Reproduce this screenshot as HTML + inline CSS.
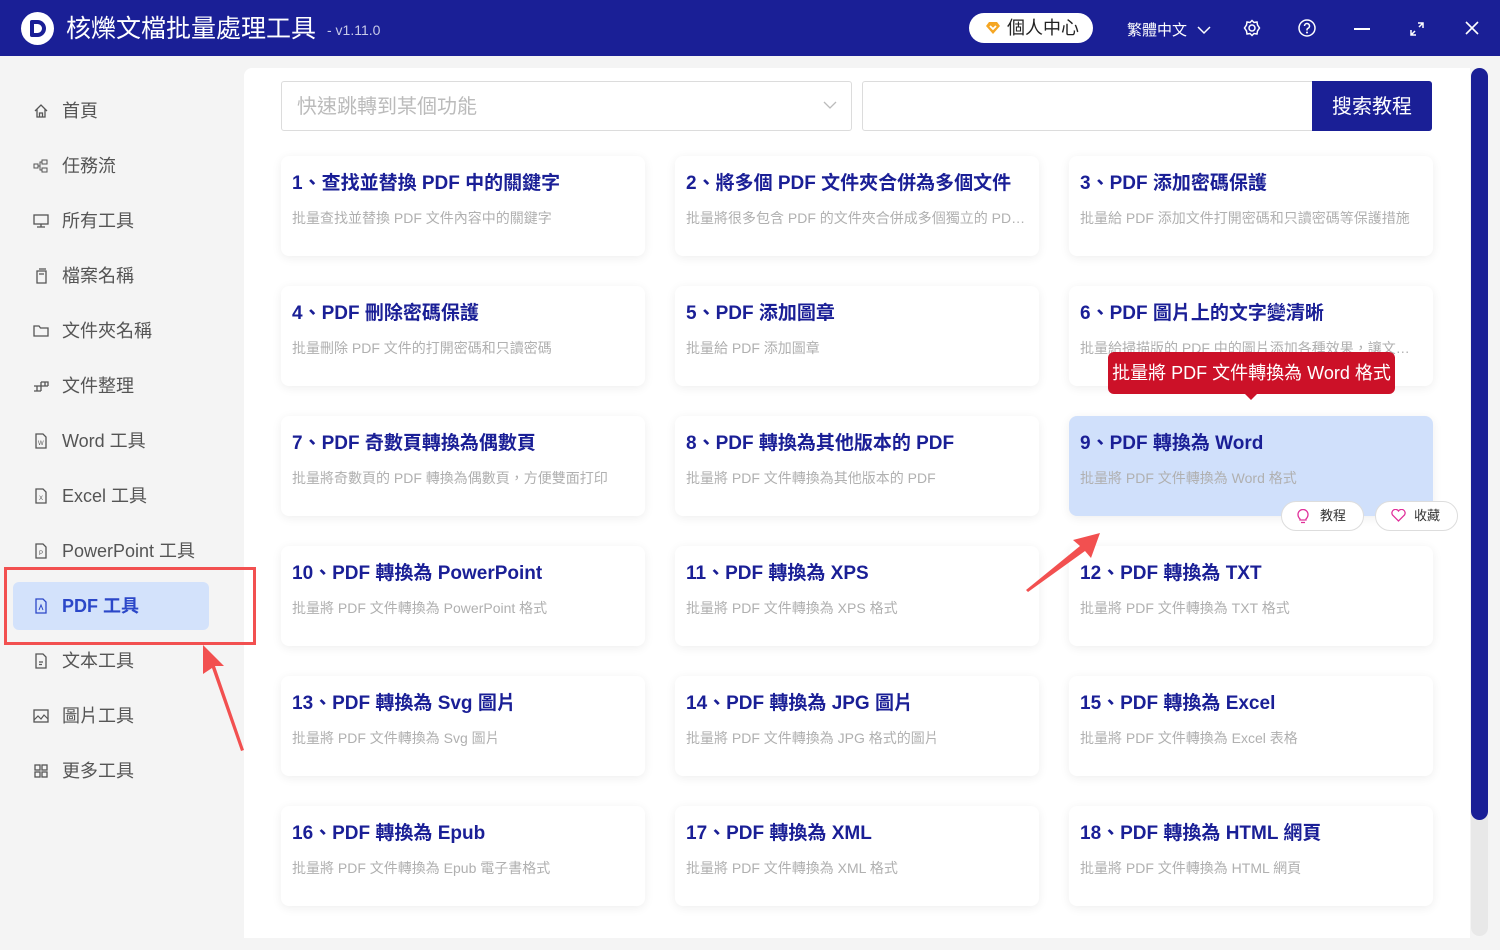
<!DOCTYPE html>
<html style="width:1500px;height:950px;overflow:hidden"><head><meta charset="utf-8"><style>
*{margin:0;padding:0;box-sizing:border-box}
body{width:1500px;height:950px;overflow:hidden;background:#f4f4f4;font-family:"Liberation Sans","Noto Sans CJK TC",sans-serif;position:relative}
.hdr{position:absolute;left:0;top:0;width:1500px;height:56px;background:#1a1f96;color:#fff}
.logo{position:absolute;left:21px;top:12px;width:33px;height:33px;border-radius:50%;background:#fff}
.logo b{position:absolute;left:9px;top:8px;width:16px;height:17px;border:4px solid #1a1f96;border-radius:2px 9px 9px 2px}
.title{position:absolute;left:66px;top:14px;font-size:25px;line-height:30px}
.ver{position:absolute;left:327px;top:22px;font-size:14px;color:#c8cae8}
.pc{position:absolute;left:969px;top:13px;width:124px;height:30px;border-radius:15px;background:#fff;color:#222;font-size:18px;line-height:30px;padding-left:38px}
.pc svg{position:absolute;left:16px;top:8px}
.lang{position:absolute;left:1127px;top:19px;font-size:15px}
.side{position:absolute;left:0;top:56px;width:209px;height:894px;background:#f4f4f4}
.it{position:absolute;left:0;width:209px;height:48px;font-size:18px;color:#555;line-height:48px;padding-left:62px}
.it svg{position:absolute;left:33px;top:16px}
.act{left:13px;width:196px;background:#d3e2fb;border-radius:6px;color:#2b47c8;font-weight:bold;padding-left:49px}
.act svg{left:20px}
.redbox{position:absolute;left:4px;top:567px;width:252px;height:78px;border:3px solid #f25050;z-index:5}
.panel{position:absolute;left:244px;top:68px;width:1226px;height:870px;background:#fff;border-radius:8px 0 0 0}
.sel{position:absolute;left:281px;top:81px;width:571px;height:50px;border:1px solid #dcdcdc;border-radius:3px;font-size:20px;color:#bbb;line-height:50px;padding-left:15px}
.inp{position:absolute;left:862px;top:81px;width:570px;height:50px;border:1px solid #dcdcdc;border-radius:3px}
.btn{position:absolute;left:1312px;top:81px;width:120px;height:50px;background:#1a1f96;color:#fff;font-size:20px;line-height:52px;text-align:center;border-radius:0 3px 3px 0}
.card{position:absolute;width:364px;height:100px;background:#fff;border-radius:8px;box-shadow:0 2px 10px rgba(0,0,0,.07)}
.card h3{position:absolute;left:11px;top:12px;font-size:19px;color:#1a1f96;font-weight:bold;white-space:nowrap}
.card p{position:absolute;left:11px;top:52px;font-size:14px;color:#b0b0b0;white-space:nowrap;width:340px;overflow:hidden;text-overflow:ellipsis}
.hl{background:#d0e0fb}
.tip{position:absolute;left:1108px;top:352px;width:287px;height:42px;background:#cc1128;color:#fff;border-radius:6px;font-size:18px;line-height:42px;text-align:center;white-space:nowrap;z-index:6}
.tip:after{content:"";position:absolute;left:135px;top:40px;border:8px solid transparent;border-top-color:#cc1128}
.pill{position:absolute;top:501px;width:83px;height:30px;border:1px solid #ddd;border-radius:15px;background:#fff;font-size:13px;color:#333;line-height:28px;padding-left:38px}
.pill svg{position:absolute;left:15px;top:7px}
.sb{position:absolute;left:1471px;top:68px;width:17px;height:868px;background:#e8e8e8;border-radius:9px}
.sb div{width:17px;height:752px;background:#1a1f96;border-radius:9px}
</style></head><body>
<div class="hdr">
<div class="logo"><b></b></div>
<div class="title">核爍文檔批量處理工具</div><div class="ver">- v1.11.0</div>
<div class="pc"><svg width="16" height="14" viewBox="0 0 16 14"><path d="M1 5L4 1H12L15 5L8 13Z" fill="#f5a623"/><path d="M5 5L8 8L11 5" stroke="#fff" stroke-width="1.8" fill="none"/></svg>個人中心</div>
<div class="lang">繁體中文 <svg width="14" height="10" viewBox="0 0 14 10" style="margin-left:6px"><path d="M1 2L7 8L13 2" stroke="#fff" stroke-width="1.5" fill="none"/></svg></div>
<svg style="position:absolute;left:1243px;top:19px" width="18" height="18" viewBox="0 0 18 18"><circle cx="9" cy="9" r="3" stroke="#fff" stroke-width="1.5" fill="none"/><path d="M9 1.5L11 3.5L14 3L14.5 6L16.5 9L14.5 12L14 15L11 14.5L9 16.5L7 14.5L4 15L3.5 12L1.5 9L3.5 6L4 3L7 3.5Z" stroke="#fff" stroke-width="1.5" fill="none"/></svg>
<svg style="position:absolute;left:1298px;top:19px" width="18" height="18" viewBox="0 0 18 18"><circle cx="9" cy="9" r="8" stroke="#fff" stroke-width="1.5" fill="none"/><path d="M6.5 7a2.5 2.5 0 1 1 3.5 2.3c-.7.3-1 .8-1 1.5v.7" stroke="#fff" stroke-width="1.5" fill="none"/><circle cx="9" cy="13.5" r="1" fill="#fff"/></svg>
<div style="position:absolute;left:1354px;top:28px;width:16px;height:1.5px;background:#fff"></div>
<svg style="position:absolute;left:1409px;top:21px" width="16" height="16" viewBox="0 0 16 16"><path d="M2 14L6 10M10 6L14 2M9 2H14V7M2 9V14H7" stroke="#fff" stroke-width="1.5" fill="none"/></svg>
<svg style="position:absolute;left:1464px;top:20px" width="16" height="16" viewBox="0 0 16 16"><path d="M2 2L14 14M14 2L2 14" stroke="#fff" stroke-width="1.6"/></svg>
</div>
<div class="side">
<div class="it" style="top:31px"><svg width="16" height="16" viewBox="0 0 16 16"><path d="M2 8L8 2L14 8M4 6V14H12V6M6.5 14V10H9.5V14" stroke="#555" stroke-width="1.3" fill="none"/></svg>首頁</div>
<div class="it" style="top:86px"><svg width="16" height="16" viewBox="0 0 16 16"><rect x="1" y="6" width="4" height="4" stroke="#555" fill="none"/><rect x="9" y="2" width="5" height="4" stroke="#555" fill="none"/><rect x="9" y="10" width="5" height="4" stroke="#555" fill="none"/><path d="M5 8H7V4H9M7 8V12H9" stroke="#555" fill="none"/></svg>任務流</div>
<div class="it" style="top:141px"><svg width="16" height="16" viewBox="0 0 16 16"><rect x="1" y="2" width="14" height="9" stroke="#555" stroke-width="1.3" fill="none"/><path d="M8 11V14M4 14H12" stroke="#555" stroke-width="1.3"/></svg>所有工具</div>
<div class="it" style="top:196px"><svg width="16" height="16" viewBox="0 0 16 16"><path d="M4 3H13V15H4ZM6 1H13M6 6H11" stroke="#555" stroke-width="1.3" fill="none"/></svg>檔案名稱</div>
<div class="it" style="top:251px"><svg width="16" height="16" viewBox="0 0 16 16"><path d="M1 3H6L7.5 5H15V13H1Z" stroke="#555" stroke-width="1.3" fill="none"/></svg>文件夾名稱</div>
<div class="it" style="top:306px"><svg width="16" height="16" viewBox="0 0 16 16"><path d="M1 8H15M4 8V13M8 4V13M12 4V8M8 4H15V8M1 13H8" stroke="#555" stroke-width="1.3" fill="none"/></svg>文件整理</div>
<div class="it" style="top:361px"><svg width="16" height="16" viewBox="0 0 16 16"><path d="M3 1H10L13 4V15H3Z" stroke="#555" stroke-width="1.3" fill="none"/><text x="5" y="12" font-size="6" fill="#555">W</text></svg>Word 工具</div>
<div class="it" style="top:416px"><svg width="16" height="16" viewBox="0 0 16 16"><path d="M3 1H10L13 4V15H3Z" stroke="#555" stroke-width="1.3" fill="none"/><text x="6" y="12" font-size="6" fill="#555">X</text></svg>Excel 工具</div>
<div class="it" style="top:471px"><svg width="16" height="16" viewBox="0 0 16 16"><path d="M3 1H10L13 4V15H3Z" stroke="#555" stroke-width="1.3" fill="none"/><text x="6" y="12" font-size="6" fill="#555">P</text></svg>PowerPoint 工具</div>
<div class="it act" style="top:526px"><svg width="16" height="16" viewBox="0 0 16 16"><path d="M3 1H10L13 4V15H3Z" stroke="#2b47c8" stroke-width="1.3" fill="none"/><path d="M6 12L8 7L10 12" stroke="#2b47c8" fill="none"/></svg>PDF 工具</div>
<div class="it" style="top:581px"><svg width="16" height="16" viewBox="0 0 16 16"><path d="M3 1H10L13 4V15H3ZM6 9H10M6 11.5H9" stroke="#555" stroke-width="1.3" fill="none"/></svg>文本工具</div>
<div class="it" style="top:636px"><svg width="16" height="16" viewBox="0 0 16 16"><rect x="1" y="2" width="14" height="12" stroke="#555" stroke-width="1.3" fill="none"/><path d="M1 12L5 8L8 11L11 7L15 11" stroke="#555" stroke-width="1.2" fill="none"/></svg>圖片工具</div>
<div class="it" style="top:691px"><svg width="16" height="16" viewBox="0 0 16 16"><rect x="2" y="2" width="5" height="5" stroke="#555" stroke-width="1.3" fill="none"/><rect x="9" y="2" width="5" height="5" stroke="#555" stroke-width="1.3" fill="none"/><rect x="2" y="9" width="5" height="5" stroke="#555" stroke-width="1.3" fill="none"/><rect x="9" y="9" width="5" height="5" stroke="#555" stroke-width="1.3" fill="none"/></svg>更多工具</div>
</div>
<div class="panel"></div>
<div class="redbox"></div>
<div class="sel">快速跳轉到某個功能<svg style="position:absolute;right:14px;top:19px" width="14" height="9" viewBox="0 0 14 9"><path d="M1 1L7 7L13 1" stroke="#bbb" stroke-width="1.3" fill="none"/></svg></div>
<div class="inp"></div><div class="btn">搜索教程</div>

<div class="card" style="left:281px;top:156px"><h3>1、查找並替換 PDF 中的關鍵字</h3><p>批量查找並替換 PDF 文件內容中的關鍵字</p></div>
<div class="card" style="left:675px;top:156px"><h3>2、將多個 PDF 文件夾合併為多個文件</h3><p>批量將很多包含 PDF 的文件夾合併成多個獨立的 PDF 文件</p></div>
<div class="card" style="left:1069px;top:156px"><h3>3、PDF 添加密碼保護</h3><p>批量給 PDF 添加文件打開密碼和只讀密碼等保護措施</p></div>
<div class="card" style="left:281px;top:286px"><h3>4、PDF 刪除密碼保護</h3><p>批量刪除 PDF 文件的打開密碼和只讀密碼</p></div>
<div class="card" style="left:675px;top:286px"><h3>5、PDF 添加圖章</h3><p>批量給 PDF 添加圖章</p></div>
<div class="card" style="left:1069px;top:286px"><h3>6、PDF 圖片上的文字變清晰</h3><p>批量給掃描版的 PDF 中的圖片添加各種效果，讓文字更清晰</p></div>
<div class="card" style="left:281px;top:416px"><h3>7、PDF 奇數頁轉換為偶數頁</h3><p>批量將奇數頁的 PDF 轉換為偶數頁，方便雙面打印</p></div>
<div class="card" style="left:675px;top:416px"><h3>8、PDF 轉換為其他版本的 PDF</h3><p>批量將 PDF 文件轉換為其他版本的 PDF</p></div>
<div class="card hl" style="left:1069px;top:416px"><h3>9、PDF 轉換為 Word</h3><p>批量將 PDF 文件轉換為 Word 格式</p></div>
<div class="card" style="left:281px;top:546px"><h3>10、PDF 轉換為 PowerPoint</h3><p>批量將 PDF 文件轉換為 PowerPoint 格式</p></div>
<div class="card" style="left:675px;top:546px"><h3>11、PDF 轉換為 XPS</h3><p>批量將 PDF 文件轉換為 XPS 格式</p></div>
<div class="card" style="left:1069px;top:546px"><h3>12、PDF 轉換為 TXT</h3><p>批量將 PDF 文件轉換為 TXT 格式</p></div>
<div class="card" style="left:281px;top:676px"><h3>13、PDF 轉換為 Svg 圖片</h3><p>批量將 PDF 文件轉換為 Svg 圖片</p></div>
<div class="card" style="left:675px;top:676px"><h3>14、PDF 轉換為 JPG 圖片</h3><p>批量將 PDF 文件轉換為 JPG 格式的圖片</p></div>
<div class="card" style="left:1069px;top:676px"><h3>15、PDF 轉換為 Excel</h3><p>批量將 PDF 文件轉換為 Excel 表格</p></div>
<div class="card" style="left:281px;top:806px"><h3>16、PDF 轉換為 Epub</h3><p>批量將 PDF 文件轉換為 Epub 電子書格式</p></div>
<div class="card" style="left:675px;top:806px"><h3>17、PDF 轉換為 XML</h3><p>批量將 PDF 文件轉換為 XML 格式</p></div>
<div class="card" style="left:1069px;top:806px"><h3>18、PDF 轉換為 HTML 網頁</h3><p>批量將 PDF 文件轉換為 HTML 網頁</p></div>

<div class="tip">批量將 PDF 文件轉換為 Word 格式</div>
<div class="pill" style="left:1281px"><svg width="12" height="15" viewBox="0 0 12 15"><path d="M3 10C1 8 1 6 1 5.5A5 5 0 0 1 11 5.5C11 6 11 8 9 10V11H3ZM4 13.5H8" stroke="#e0309a" stroke-width="1.3" fill="none"/></svg>教程</div>
<div class="pill" style="left:1375px"><svg width="15" height="13" viewBox="0 0 15 13"><path d="M7.5 12L1.5 6A3.3 3.3 0 0 1 7.5 2A3.3 3.3 0 0 1 13.5 6Z" stroke="#e0309a" stroke-width="1.3" fill="none"/></svg>收藏</div>

<svg style="position:absolute;left:0;top:0;z-index:7" width="1500" height="950"><g fill="#f25050">
<path d="M244 750L241 751L212 668L203 674L203 645L224 666L215 666Z"/>
<path d="M1028 592L1026 590L1080 546L1073 540L1100 533L1091 558L1085 551Z"/></g></svg>
<div class="sb"><div></div></div>
</body></html>
